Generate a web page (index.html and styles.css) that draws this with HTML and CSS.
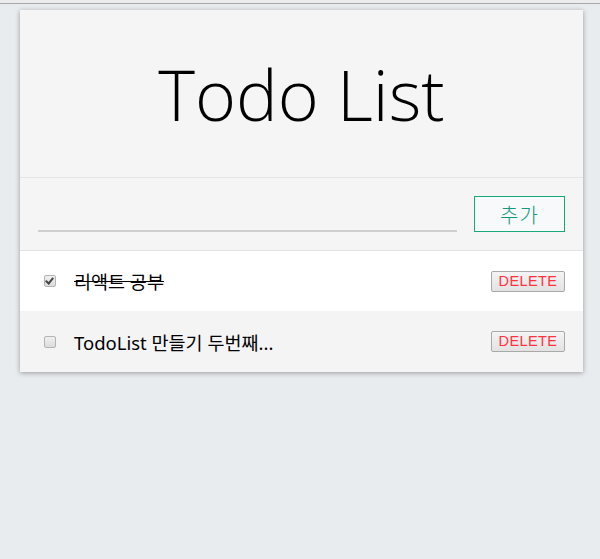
FILE: index.html
```html
<!DOCTYPE html>
<html lang="ko">
<head>
<meta charset="utf-8">
<title>Todo List</title>
<link rel="stylesheet" href="styles.css">
</head>
<body>
<div class="topbar"></div>
<main class="card">
  <header class="head">
    <h1 class="title">Todo List</h1>
  </header>
  <form class="form">
    <input class="field" type="text" value="">
    <button class="add" type="button">추가</button>
  </form>
  <ul class="list">
    <li class="item">
      <input class="check" type="checkbox" checked>
      <span class="text done">리액트 공부</span>
      <button class="del" type="button">DELETE</button>
    </li>
    <li class="item alt">
      <input class="check" type="checkbox">
      <span class="text">TodoList 만들기 두번째...</span>
      <button class="del" type="button">DELETE</button>
    </li>
  </ul>
</main>
</body>
</html>
```

FILE: styles.css
```css
html, body {
  margin: 0;
  padding: 0;
}
body {
  background: #e9ecef;
  font-family: "Noto Sans", "Noto Sans CJK KR", sans-serif;
  height: 559px;
  overflow: hidden;
}
.topbar {
  height: 3px;
  background: #ececec;
  border-bottom: 1px solid #a8a8a8;
}
.card {
  width: 563px;
  margin: 6px 0 0 20px;
  background: #f5f5f5;
  box-shadow: 0 1px 5px rgba(0, 0, 0, 0.35);
}
.head {
  height: 167px;
  border-bottom: 1px solid #e4e4e4;
  display: flex;
  align-items: center;
  justify-content: center;
}
.title {
  margin: 0;
  font-family: "Open Sans", sans-serif;
  font-weight: 300;
  font-size: 70px;
  line-height: 1;
  color: #000;
  padding-bottom: 0;
}
.form {
  height: 73px;
  margin: 0;
  border-bottom: 1px solid #e4e4e4;
  display: flex;
  align-items: flex-start;
  padding: 18px 18px 0 18px;
  box-sizing: border-box;
  gap: 17px;
}
.field {
  flex: 1;
  height: 36px;
  border: none;
  border-bottom: 2px solid #cfcfcf;
  background: transparent;
  outline: none;
  padding: 0;
  box-sizing: border-box;
}
.add {
  width: 91px;
  height: 36px;
  box-sizing: border-box;
  border: 1px solid #18a87a;
  background: #f7f9fa;
  color: #14967c;
  font-family: "Noto Sans CJK KR", sans-serif;
  font-weight: 300;
  font-size: 20px;
  letter-spacing: 1px;
  padding: 0;
  cursor: pointer;
}
.list {
  list-style: none;
  margin: 0;
  padding: 0;
}
.item {
  height: 60px;
  display: flex;
  align-items: center;
  padding: 0 18px 0 24px;
  background: #fff;
}
.item.alt {
  height: 61px;
  background: #f4f4f4;
}
.check {
  appearance: none;
  -webkit-appearance: none;
  width: 12px;
  height: 12px;
  margin: 0;
  border: 1px solid #b4b4b4;
  border-radius: 2px;
  background: linear-gradient(#f0f0f0, #dcdcdc);
  position: relative;
  flex: none;
}
.check:checked::after {
  content: "";
  position: absolute;
  left: 2px;
  top: 0px;
  width: 3px;
  height: 6px;
  border-right: 2.5px solid #444;
  border-bottom: 2.5px solid #444;
  transform: rotate(40deg);
}
.text {
  margin-left: 18px;
  flex: 1;
  font-size: 18.5px;
  color: #000;
}
.done {
  text-decoration: line-through;
}
.del {
  width: 74px;
  height: 21px;
  box-sizing: border-box;
  border: 1px solid #a9a9a9;
  border-radius: 2px;
  background: linear-gradient(#f4f4f4, #e2e2e2);
  color: #ff3340;
  font-family: "Liberation Sans", Arial, sans-serif;
  font-size: 14.5px;
  letter-spacing: 0.4px;
  padding: 0;
  line-height: 19px;
}
```
